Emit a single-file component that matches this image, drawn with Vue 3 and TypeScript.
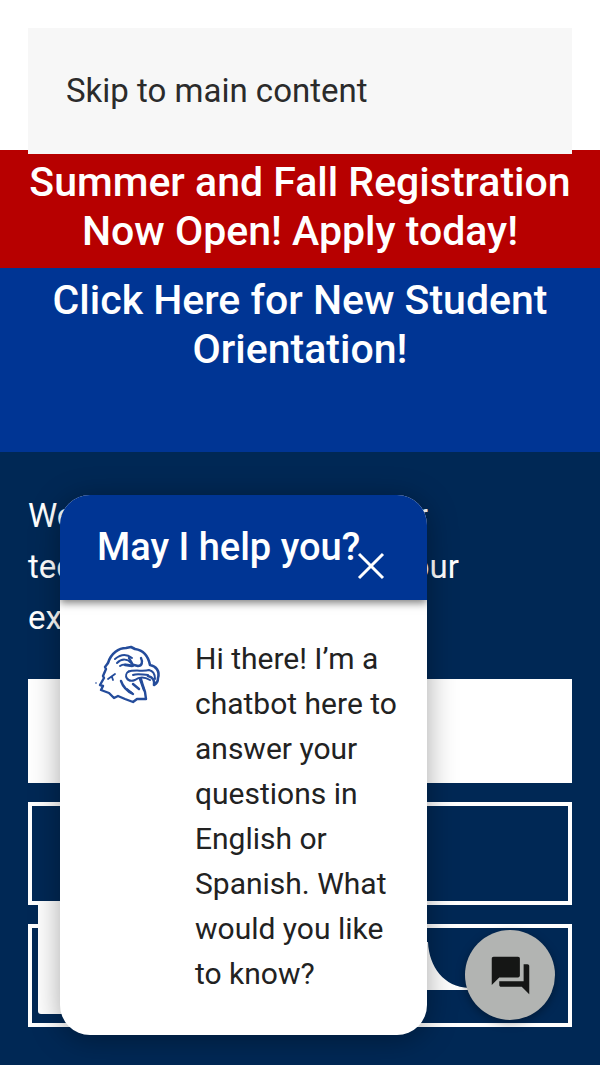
<script setup lang="ts">
import { ref } from 'vue'

const chatOpen = ref(true)
const consentActions: { label: string; primary: boolean }[] = [
  { label: 'Accept', primary: true },
  { label: 'Decline', primary: false },
  { label: 'Settings', primary: false },
]
</script>

<template>
  <div class="page">
    <header class="top">
      <a class="skip" href="#main">Skip to main content</a>
    </header>
    <main id="main">
      <a class="banner red" href="#apply">Summer and Fall Registration Now Open! Apply today!</a>
      <a class="banner blue" href="#orientation">Click Here for New Student Orientation!</a>
    </main>

    <section class="consent" aria-label="Cookie consent">
      <p class="consent-text">We use cookies and similar technologies to enhance your experience on our website.</p>
      <button
        v-for="action in consentActions"
        :key="action.label"
        type="button"
        class="consent-button"
        :class="{ primary: action.primary }"
        :aria-label="action.label"
      ></button>
    </section>

    <aside class="chat" aria-label="Chat">
      <template v-if="chatOpen">
        <div class="frame"></div>
        <svg class="tail" viewBox="0 0 42 48" aria-hidden="true">
          <path d="M0 0H1C2 25 17 45 42 46V48H0Z" fill="#fff" />
        </svg>
        <div class="panel">
          <div class="panel-head">
            <h2>May I help you?</h2>
            <button class="close" type="button" aria-label="Close" @click="chatOpen = false">
              <svg viewBox="0 0 28 28" aria-hidden="true">
                <path d="M2 2 26 26M26 2 2 26" fill="none" stroke="#fff" stroke-width="3" />
              </svg>
            </button>
          </div>
          <div class="message">
            <svg class="hawk" viewBox="0 0 66 60" aria-hidden="true" fill="none" stroke="#244c9b" stroke-linejoin="round" stroke-linecap="round">
              <path stroke-width="2.6" d="M13 18C16 8 24 3 31 3L36 2 40 4C47 5 53 10 55 20C61 21 65 26 63 33C63 37 61 39 59 40C60 36 58 32 53 31" />
              <path stroke-width="2.4" d="M13 18 10 22 11 24 8 31 9 33 5 40 8 41 6 45 14 48 19 53 23 51 30 54 38 57 42 54 51 54 50 47 48 41 46 34" />
              <path stroke-width="2" d="M20 14C26 9 32 9 37 13M22 18C27 13 33 14 36 18M25 21C29 18 34 20 38 21" />
              <path stroke-width="2.4" d="M46 13C48 17 47 21 43 21L39 20M34 13 38 20M30 20 37 21" />
              <path stroke-width="2" d="M33 27C39 24 48 27 54 25C59 26 60 30 60 34M34 26C28 30 32 38 40 35C45 31 50 32 55 35M38 30C43 28 48 30 53 30" />
              <path stroke-width="2.4" d="M45 34 49 45M26 36C28 42 32 46 38 49M38 39 44 44" />
              <path stroke-width="1.8" d="M13 34 20 29M17 32 18 35M32 44 37 48" />
              <circle cx="1" cy="38" r="1" fill="#7891c3" stroke="none" />
            </svg>
            <p>Hi there! I’m a chatbot here to answer your questions in English or Spanish. What would you like to know?</p>
          </div>
        </div>
      </template>
      <button class="launcher" type="button" aria-label="Toggle chat" @click="chatOpen = !chatOpen">
        <svg viewBox="0 0 24 24" aria-hidden="true">
          <path fill="#151615" d="M3 2H16C16.600 2 17 2.400 17 3V12C17 12.600 16.600 13 16 13H6L2 17V3C2 2.400 2.400 2 3 2ZM19 6H21C21.600 6 22 6.400 22 7V22L18 18H7C6.400 18 6 17.600 6 17V15H19Z" />
        </svg>
      </button>
    </aside>
  </div>
</template>

<style>
body {
  margin: 0;
  background: #003594;
}
</style>

<style scoped>
* {
  box-sizing: border-box;
}

.page {
  position: relative;
  display: flex;
  flex-direction: column;
  min-height: 100vh;
  overflow: hidden;
  background: #003594;
  font-family: Roboto, "Liberation Sans", sans-serif;
}

.top {
  height: 150px;
  padding: 28px 28px 0;
  background: #fff;
}

.skip {
  position: relative;
  z-index: 1;
  display: block;
  padding: 38px;
  background: #f7f7f7;
  color: #2b2b2b;
  font-size: 33px;
  line-height: 50px;
  text-decoration: none;
}

.banner {
  display: block;
  padding: 8px 24px 12px;
  color: #fff;
  font-size: 41px;
  font-weight: 500;
  line-height: 49px;
  text-align: center;
  text-decoration: none;
}

.red {
  background: #b70000;
}

.blue {
  background: #003594;
}

.consent {
  display: flex;
  flex-direction: column;
  gap: 19px;
  margin-top: auto;
  padding: 38px 28px;
  background: #002855;
}

.consent-text {
  max-width: 460px;
  margin: 0 0 17px;
  color: #fff;
  font-size: 33px;
  line-height: 51px;
}

.consent-button {
  height: 103px;
  padding: 0;
  border: 4px solid #fff;
  background: transparent;
}

.consent-button.primary {
  height: 104px;
  background: #fff;
}

.chat {
  position: absolute;
  right: 45px;
  bottom: 30px;
  left: 38px;
}

.frame {
  position: absolute;
  bottom: 21px;
  left: 0;
  width: 300px;
  height: 112px;
  border-radius: 3px;
  background: #fff;
}

.tail {
  position: absolute;
  right: 86px;
  bottom: 45px;
  width: 42px;
  height: 48px;
}

.panel {
  position: relative;
  display: flex;
  flex-direction: column;
  min-height: 540px;
  margin: 0 128px 0 22px;
  overflow: hidden;
  border-radius: 30px;
  background: #fff;
  box-shadow: 0 4px 30px rgba(0, 0, 0, 0.35);
}

.panel-head {
  display: flex;
  justify-content: space-between;
  padding: 28px 42px 28px 37px;
  background: #003594;
  box-shadow: 0 3px 8px rgba(0, 0, 0, 0.5);
}

h2 {
  margin: 0;
  color: #fff;
  font-size: 38px;
  font-weight: 500;
  line-height: 49px;
  white-space: nowrap;
}

.close {
  align-self: flex-end;
  width: 28px;
  height: 28px;
  margin: 0 0 -8px -16px;
  padding: 0;
  border: 0;
  background: none;
}

.close svg,
.hawk {
  display: block;
}

.message {
  display: flex;
  gap: 34px;
  padding: 36px 20px 38px 35px;
}

.hawk {
  flex: none;
  width: 66px;
  height: 60px;
  margin-top: 9px;
}

.message p {
  margin: 0;
  color: #222;
  font-size: 30px;
  line-height: 45px;
}

.launcher {
  position: absolute;
  right: 0;
  bottom: 15px;
  display: grid;
  place-items: center;
  width: 90px;
  height: 90px;
  padding: 0;
  border: 0;
  border-radius: 50%;
  background: #b2b4b2;
  box-shadow: 0 3px 10px rgba(0, 0, 0, 0.35);
}

.launcher svg {
  width: 45px;
  height: 45px;
}
</style>
